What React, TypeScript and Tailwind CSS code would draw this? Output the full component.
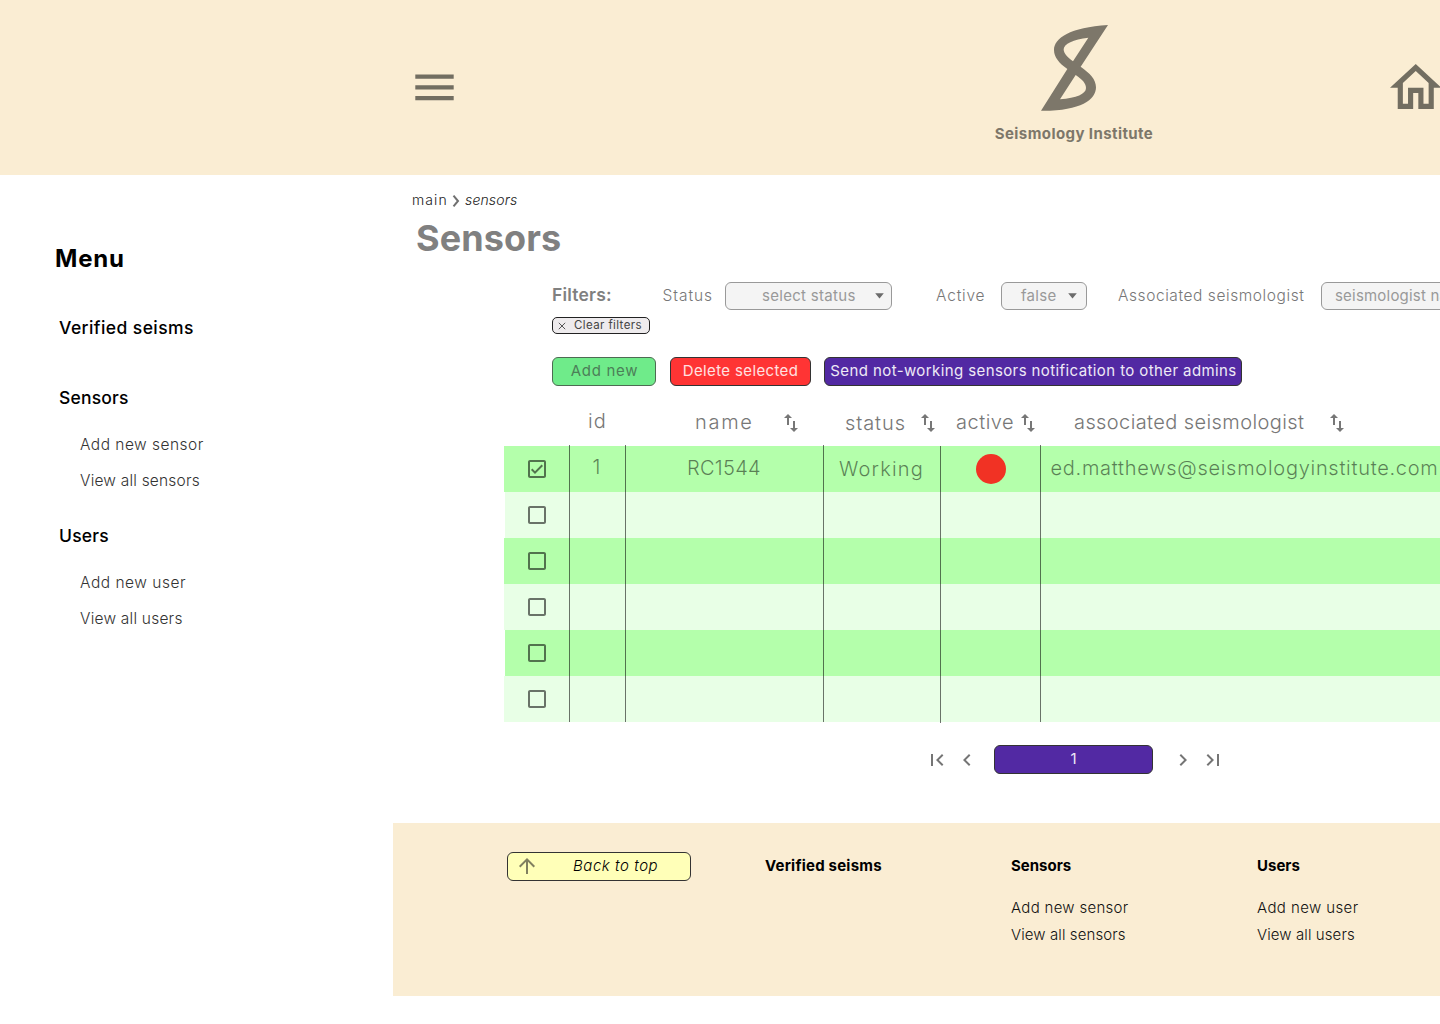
import type { ReactNode } from 'react';

type IconProps = { d: string; className?: string };

function Icon({ d, className = '' }: IconProps) {
  return (
    <svg viewBox="0 0 24 24" fill="currentColor" className={`size-6 shrink-0 ${className}`}>
      <path d={d} />
    </svg>
  );
}

const SORT = 'M9 3L5 6.99h3V14h2V6.99h3L9 3zm7 14.01V10h-2v7.01h-3L15 21l4-3.99h-3z';
const BOX =
  'M19 5v14H5V5h14m0-2H5c-1.1 0-2 .9-2 2v14c0 1.1.9 2 2 2h14c1.1 0 2-.9 2-2V5c0-1.1-.9-2-2-2z';
const BOX_CHECKED =
  'M19 3H5c-1.1 0-2 .9-2 2v14c0 1.1.9 2 2 2h14c1.1 0 2-.9 2-2V5c0-1.1-.9-2-2-2zm0 16H5V5h14v14zM17.99 9l-1.41-1.42-6.59 6.59-2.58-2.57-1.42 1.41 4 3.99z';
const FIRST = 'M18.41 16.59L13.82 12l4.59-4.59L17 6l-6 6 6 6zM6 6h2v12H6z';
const PREV = 'M15.41 7.41L14 6l-6 6 6 6 1.41-1.41L10.83 12z';
const NEXT = 'M10 6L8.59 7.41 13.17 12l-4.58 4.59L10 18l6-6z';
const LAST = 'M5.59 7.41L10.18 12l-4.59 4.59L7 18l6-6-6-6zM16 6h2v12h-2z';
const UP = 'M4 12l1.41 1.41L11 7.83V20h2V7.83l5.58 5.59L20 12l-8-8-8 8z';

function Header() {
  return (
    <header className="flex h-[175px] shrink-0 items-start bg-[#faedd3] text-[#726e61]">
      <svg viewBox="0 0 39 27" fill="currentColor" className="mt-[74px] ml-[415px] h-[27px] w-[39px] shrink-0">
        <path d="M.3.6h38.400v4.200H.3zM.3 11.300h38.400v4.200H.3zM.3 22h38.400v4.200H.3z" />
      </svg>
      <div className="mt-[25px] ml-[540px] flex w-[160px] shrink-0 flex-col items-center text-[#7d776a]">
        <svg viewBox="183 75 201 258" fill="currentColor" fillRule="evenodd" className="h-[86px] w-[67px]">
          <path d="M384 75C270 82 222 115 222 150C222 172 238 190 262 207L183 332.500C300 334 348 300 348 262C348 238 330 220 302 200ZM325 113C280 118 251 132 251 148C251 160 262 172 279 184ZM287 225C308 240 318 250 318 264C318 282 290 294 240 298Z" />
        </svg>
        <span className="mt-[13px] text-[15px] leading-5 font-bold tracking-[0.42px]">Seismology Institute</span>
      </div>
      <svg viewBox="2 3 20 17" preserveAspectRatio="none" fill="currentColor" className="mt-[64px] ml-[235.5px] h-[45px] w-[51.5px] shrink-0">
        <path d="M12 5.69l5 4.500V18h-2v-6H9v6H7v-7.810l5-4.500M12 3L2 12h3v8h6v-6h2v6h6v-8h3L12 3z" />
      </svg>
    </header>
  );
}

function Sidebar() {
  return (
    <nav className="flex w-[393px] shrink-0 flex-col pt-[72px] leading-6">
      <h2 className="pl-[55px] text-[24px] font-bold tracking-[0.8px]">Menu</h2>
      <a className="mt-[45px] pl-[59px] text-[17.5px] font-medium tracking-[0.42px]">Verified seisms</a>
      <a className="mt-[46px] pl-[59px] text-[17.5px] font-medium tracking-[0.2px]">Sensors</a>
      <div className="mt-[23px] flex flex-col gap-3 pl-[80px] text-[15.5px] font-light text-[#333]">
        <a className="tracking-[0.48px]">Add new sensor</a>
        <a className="tracking-[0.2px]">View all sensors</a>
      </div>
      <a className="mt-[31px] pl-[59px] text-[17.5px] font-medium tracking-[0.2px]">Users</a>
      <div className="mt-[23px] flex flex-col gap-3 pl-[80px] text-[15.5px] font-light text-[#333]">
        <a className="tracking-[0.52px]">Add new user</a>
        <a className="tracking-[0.22px]">View all users</a>
      </div>
    </nav>
  );
}

function Caret({ className = '' }: { className?: string }) {
  return (
    <svg viewBox="0 0 9 6" className={`h-[6px] w-[9px] shrink-0 ${className}`}>
      <path d="M.2.300h8.600L4.500 5.500z" fill="#6b6b6b" />
    </svg>
  );
}

function Filters() {
  const select =
    'flex h-7 shrink-0 items-center rounded-[6px] border border-[#999] bg-[#f4f4f4] text-[15px] text-[#999]';
  return (
    <div className="flex flex-col pl-[159px]">
      <div className="flex h-7 items-center text-[15.5px] font-light text-[#777]">
        <span className="w-[110.5px] shrink-0 pb-px text-[17.5px] font-semibold tracking-[0.2px] text-[#808080]">Filters:</span>
        <span className="w-[62.5px] shrink-0 tracking-[0.95px]">Status</span>
        <div className={`${select} w-[167px] pl-[36px] font-normal`}>
          <span className="w-[113px] tracking-[0.3px]">select status</span>
          <Caret />
        </div>
        <span className="ml-[44px] w-[65px] shrink-0 tracking-[0.8px]">Active</span>
        <div className={`${select} w-[86px] pl-[19px] font-normal`}>
          <span className="w-[47px] tracking-[0.3px]">false</span>
          <Caret />
        </div>
        <span className="ml-[31px] w-[203px] shrink-0 tracking-[0.57px]">Associated seismologist</span>
        <div className={`${select} w-[200px] pl-[13px] font-normal`}>
          <span className="tracking-[0.2px]">seismologist name</span>
        </div>
      </div>
      <button className="mt-[7px] flex h-[17px] w-[98px] items-center rounded-[5px] border border-[#222] bg-[#eeebed] pl-[5px] text-[11.5px] leading-none text-[#444]">
        <svg viewBox="0 0 8 8" className="mr-[8px] size-2 shrink-0" stroke="#555" strokeWidth="1">
          <path d="M.8.8l6.400 6.400M7.200.8L.8 7.200" />
        </svg>
        <span className="pt-px tracking-[0.4px]">Clear filters</span>
      </button>
    </div>
  );
}

function Actions() {
  const base = 'flex h-[29px] shrink-0 items-center justify-center rounded-[6px] border pb-px text-[15px]';
  return (
    <div className="mt-[23px] flex pl-[159px]">
      <button className={`${base} w-[104px] border-[#4d6b52] bg-[#6feb8a] pl-px tracking-[0.7px] text-[#4c7f58]`}>Add new</button>
      <button className={`${base} ml-[14px] w-[141px] border-[#333] bg-[#ff3434] tracking-[0.36px] text-[#ffe1e1]`}>Delete selected</button>
      <button className={`${base} ml-[13px] w-[418px] border-[#333] bg-[#5229a3] pl-px tracking-[0.4px] text-[#eee9f6]`}>
        Send not-working sensors notification to other admins
      </button>
    </div>
  );
}

function Cell({ className, children }: { className: string; children?: ReactNode }) {
  return <div className={`flex shrink-0 items-center border-l border-black/55 ${className}`}>{children}</div>;
}

const ROWS = [
  { bg: 'bg-[#b4ffab]', edge: '' },
  { bg: 'bg-[#e8ffe6]', edge: 'border-l border-white' },
  { bg: 'bg-[#b4ffab]', edge: '' },
  { bg: 'bg-[#e8ffe6]', edge: '' },
  { bg: 'bg-[#b4ffab]', edge: 'border-l border-white' },
  { bg: 'bg-[#e8ffe6]', edge: '' },
];

function SensorTable() {
  return (
    <div className="mt-[14px] flex flex-col pl-[111px] text-[20px] font-light">
      <div className="flex h-[46px] items-center text-[#777]">
        <div className="w-[65px] shrink-0" />
        <div className="w-[56px] shrink-0 pb-1 pl-[19px] tracking-[1.2px]">id</div>
        <div className="flex w-[198px] shrink-0 items-center pl-[70px]">
          <span className="w-[84px] pb-[3px] tracking-[1.7px]">name</span>
          <Icon d={SORT} />
        </div>
        <div className="flex w-[117px] shrink-0 items-center pl-[22px]">
          <span className="w-[71px] pb-px tracking-[0.9px]">status</span>
          <Icon d={SORT} />
        </div>
        <div className="flex w-[100px] shrink-0 items-center pl-[16px]">
          <span className="w-[60px] pb-[3px] tracking-[0.5px]">active</span>
          <Icon d={SORT} />
        </div>
        <div className="flex w-[400px] shrink-0 items-center pl-[34px]">
          <span className="w-[251px] pb-[3px] tracking-[0.4px]">associated seismologist</span>
          <Icon d={SORT} />
        </div>
      </div>
      {ROWS.map((row, i) => {
        const filled = i === 0;
        return (
          <div key={i} className={`flex h-[46px] ${row.bg} text-black/50`}>
            <div className={`flex w-[65px] shrink-0 items-center justify-center ${row.edge} text-black/55`}>
              <Icon d={filled ? BOX_CHECKED : BOX} />
            </div>
            <Cell className={filled ? 'w-[56px] -mt-px pb-[3px] pl-[22.5px]' : 'w-[56px]'}>{filled && '1'}</Cell>
            <Cell className={filled ? 'w-[198px] -mt-px pb-[2px] pl-[61px] tracking-[0.3px]' : 'w-[198px]'}>{filled && 'RC1544'}</Cell>
            <Cell className={filled ? 'w-[117px] -mt-px pl-[15px] tracking-[1.2px]' : 'w-[117px]'}>{filled && 'Working'}</Cell>
            <Cell className={i === 5 ? 'w-[100px] -mb-px' : 'w-[100px] pl-[35px]'}>
              {filled && <span className="size-[30px] rounded-full bg-[#f13224]" />}
            </Cell>
            <Cell className={filled ? 'w-[400px] -mt-px pb-[2px] pl-[9.5px] tracking-[0.72px]' : 'w-[400px]'}>
              {filled && 'ed.matthews@seismologyinstitute.com'}
            </Cell>
          </div>
        );
      })}
    </div>
  );
}

function Pagination() {
  return (
    <div className="mt-[23px] flex h-[29px] items-center pl-[531.5px] text-[#757575]">
      <Icon d={FIRST} />
      <Icon d={PREV} className="ml-[6.500px]" />
      <span className="ml-[15px] flex h-[29px] w-[159px] shrink-0 items-center justify-center rounded-[6px] border border-[#333] bg-[#5229a3] pb-px text-[15px] text-[#eee9f6]">
        1
      </span>
      <Icon d={NEXT} className="ml-[17.5px]" />
      <Icon d={LAST} className="ml-[6.500px]" />
    </div>
  );
}

function Footer() {
  return (
    <footer className="mt-[49px] flex h-[173px] w-[1047px] items-start bg-[#faedd3] pt-[29px] text-[15px] font-light text-[#111]">
      <button className="ml-[114px] flex h-[29px] w-[184px] shrink-0 items-center rounded-[6px] border border-[#333] bg-[#ffffb8] pl-[7px] pb-px text-black italic">
        <Icon d={UP} className="text-[#807f5f]" />
        <span className="ml-[34px] tracking-[0.55px]">Back to top</span>
      </button>
      <h3 className="ml-[74px] w-[246px] shrink-0 pt-[2px] leading-6 font-bold tracking-[0.22px] text-black">Verified seisms</h3>
      <div className="flex w-[246px] shrink-0 flex-col pt-[2px] leading-6">
        <h3 className="font-bold text-black">Sensors</h3>
        <a className="mt-[18px] tracking-[0.3px]">Add new sensor</a>
        <a className="mt-[3px] tracking-[0.1px]">View all sensors</a>
      </div>
      <div className="flex w-[180px] shrink-0 flex-col pt-[2px] leading-6">
        <h3 className="font-bold text-black">Users</h3>
        <a className="mt-[18px] tracking-[0.4px]">Add new user</a>
        <a className="mt-[3px] tracking-[0.1px]">View all users</a>
      </div>
    </footer>
  );
}

export default function App() {
  return (
    <div className="flex h-[1024px] w-[1440px] flex-col overflow-hidden bg-white font-['Inter','Open_Sans',sans-serif] whitespace-nowrap text-black">
      <Header />
      <div className="flex">
        <Sidebar />
        <main className="flex w-[1047px] shrink-0 flex-col overflow-hidden">
          <div className="mt-[15px] flex h-5 items-center pl-[19px] text-[14px] font-light text-[#222]">
            <span className="w-[40px] pb-px tracking-[1.1px]">main</span>
            <svg viewBox="0 0 8 12" className="mt-px h-3 w-2 shrink-0" fill="none" stroke="#707070" strokeWidth="2">
              <path d="M1.500.7L6 6l-4.500 5.300" />
            </svg>
            <span className="ml-[5px] pb-px tracking-[0.15px] italic">sensors</span>
          </div>
          <h1 className="mt-[8px] mb-[24px] pl-[23px] text-[36px] leading-10 font-bold tracking-[0.1px] text-[#808080]">
            Sensors
          </h1>
          <Filters />
          <Actions />
          <SensorTable />
          <Pagination />
          <Footer />
        </main>
      </div>
    </div>
  );
}
